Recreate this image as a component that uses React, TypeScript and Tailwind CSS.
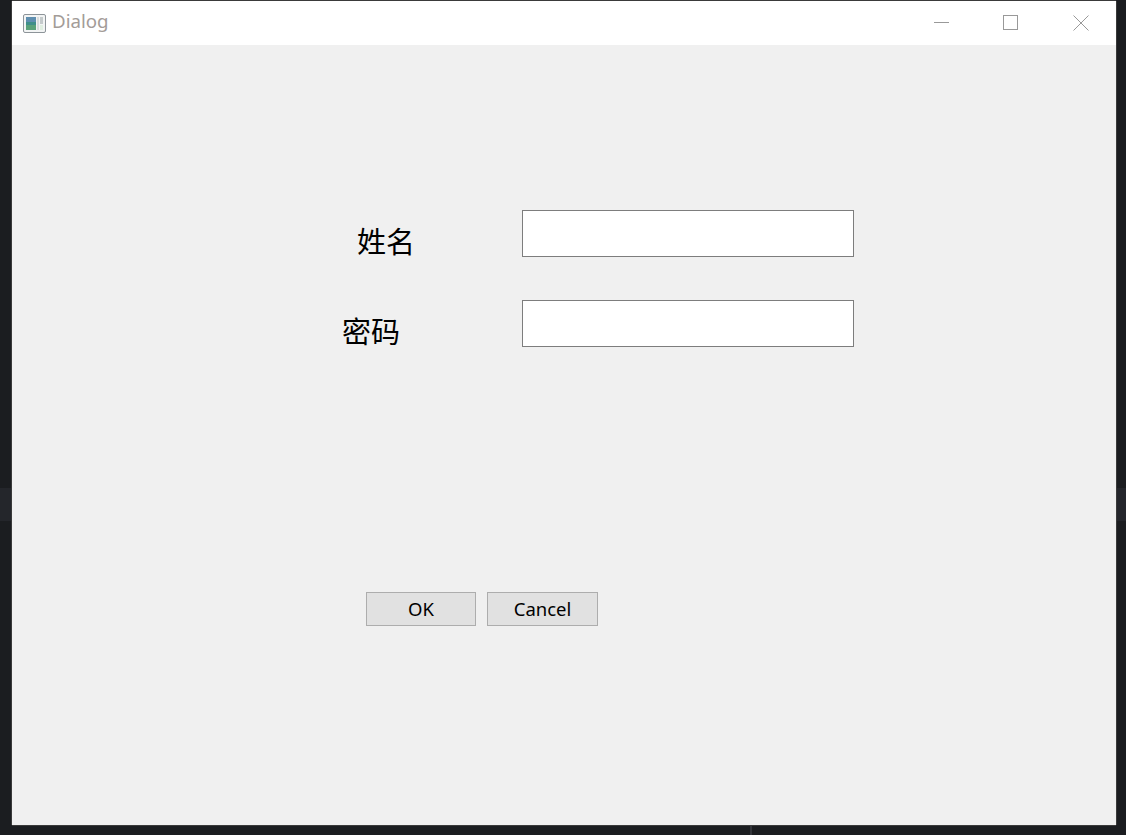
const cjk = "font-['Noto_Sans_CJK_SC','Noto_Sans',sans-serif]"

function AppIcon() {
  return (
    <svg width="23" height="19" viewBox="0 0 23 19" className="shrink-0">
      <rect x="0.5" y="0.5" width="22" height="18" rx="1.5" fill="#f2f4f4" stroke="#8d9499" />
      <rect x="3" y="3" width="10" height="13" fill="#3f8f8a" />
      <rect x="3" y="3" width="10" height="5" fill="#5f8fb0" />
      <rect x="3" y="11" width="10" height="5" fill="#5aa27a" />
      <rect x="14" y="3" width="2" height="13" fill="#d8dcdc" />
      <rect x="17" y="3" width="3" height="7" fill="#c4cacb" />
      <rect x="17" y="11" width="3" height="5" fill="#dfeee0" />
    </svg>
  )
}

function TitleBar() {
  return (
    <div className="flex h-11 shrink-0 items-center bg-white pl-[11px]">
      <AppIcon />
      <span className="-mt-[3px] ml-[6px] font-['Noto_Sans',sans-serif] text-[18.7px] text-[#a39c98]">Dialog</span>
      <div className="ml-auto flex items-center pr-[27px]">
        <svg width="16" height="16" viewBox="0 0 16 16" className="mr-[54px]">
          <path d="M1 7.5H16" stroke="#999" fill="none" />
        </svg>
        <svg width="16" height="16" viewBox="0 0 16 16" className="mr-[54px]">
          <rect x="0.5" y="0.5" width="14" height="14" stroke="#999" fill="none" />
        </svg>
        <svg width="16" height="16" viewBox="0 0 16 16">
          <path d="M0.5 0.5L15.5 15.5M15.5 0.5L0.5 15.5" stroke="#999" fill="none" />
        </svg>
      </div>
    </div>
  )
}

function FormRow({ label, indent }: { label: string; indent: string }) {
  return (
    <div className="flex h-[47px]">
      <div className="w-[510px] shrink-0">
        <div className={`mt-[11px] text-[29px] leading-[38px] text-black ${cjk} ${indent}`}>{label}</div>
      </div>
      <input className="h-[47px] w-[332px] border border-[#7d7d7d] bg-white outline-none" />
    </div>
  )
}

function DialogButton({ label, width }: { label: string; width: string }) {
  return (
    <button className={`h-[34px] ${width} border border-[#adadad] bg-[#e1e1e1] font-['Noto_Sans',sans-serif] text-[18.5px] leading-none text-black`}>
      {label}
    </button>
  )
}

export default function App() {
  return (
    <div className="relative h-[835px] w-[1126px] overflow-hidden bg-[#1b1d20]">
      {/* lighter band of the editor behind the window */}
      <div className="absolute left-0 top-[488px] h-[33px] w-full bg-[#24262b]" />
      <div className="absolute left-[750px] top-[825px] h-[10px] w-[2px] bg-[#33353a]" />

      <div className="relative ml-[12px] mt-px flex h-[824px] w-[1104px] flex-col bg-[#f0f0f0] shadow-[0_-1px_0_#3a3a3a,-1px_0_0_#3a3a3a,1px_0_0_#3a3a3a,0_1px_0_#3a3a3a]">
        <TitleBar />
        <div className="flex flex-col pt-[165px]">
          <FormRow label="姓名" indent="pl-[345px]" />
          <div className="h-[43px]" />
          <FormRow label="密码" indent="pl-[330px]" />
          <div className="ml-[354px] mt-[245px] flex gap-[11px]">
            <DialogButton label="OK" width="w-[110px]" />
            <DialogButton label="Cancel" width="w-[111px]" />
          </div>
        </div>
      </div>
    </div>
  )
}
